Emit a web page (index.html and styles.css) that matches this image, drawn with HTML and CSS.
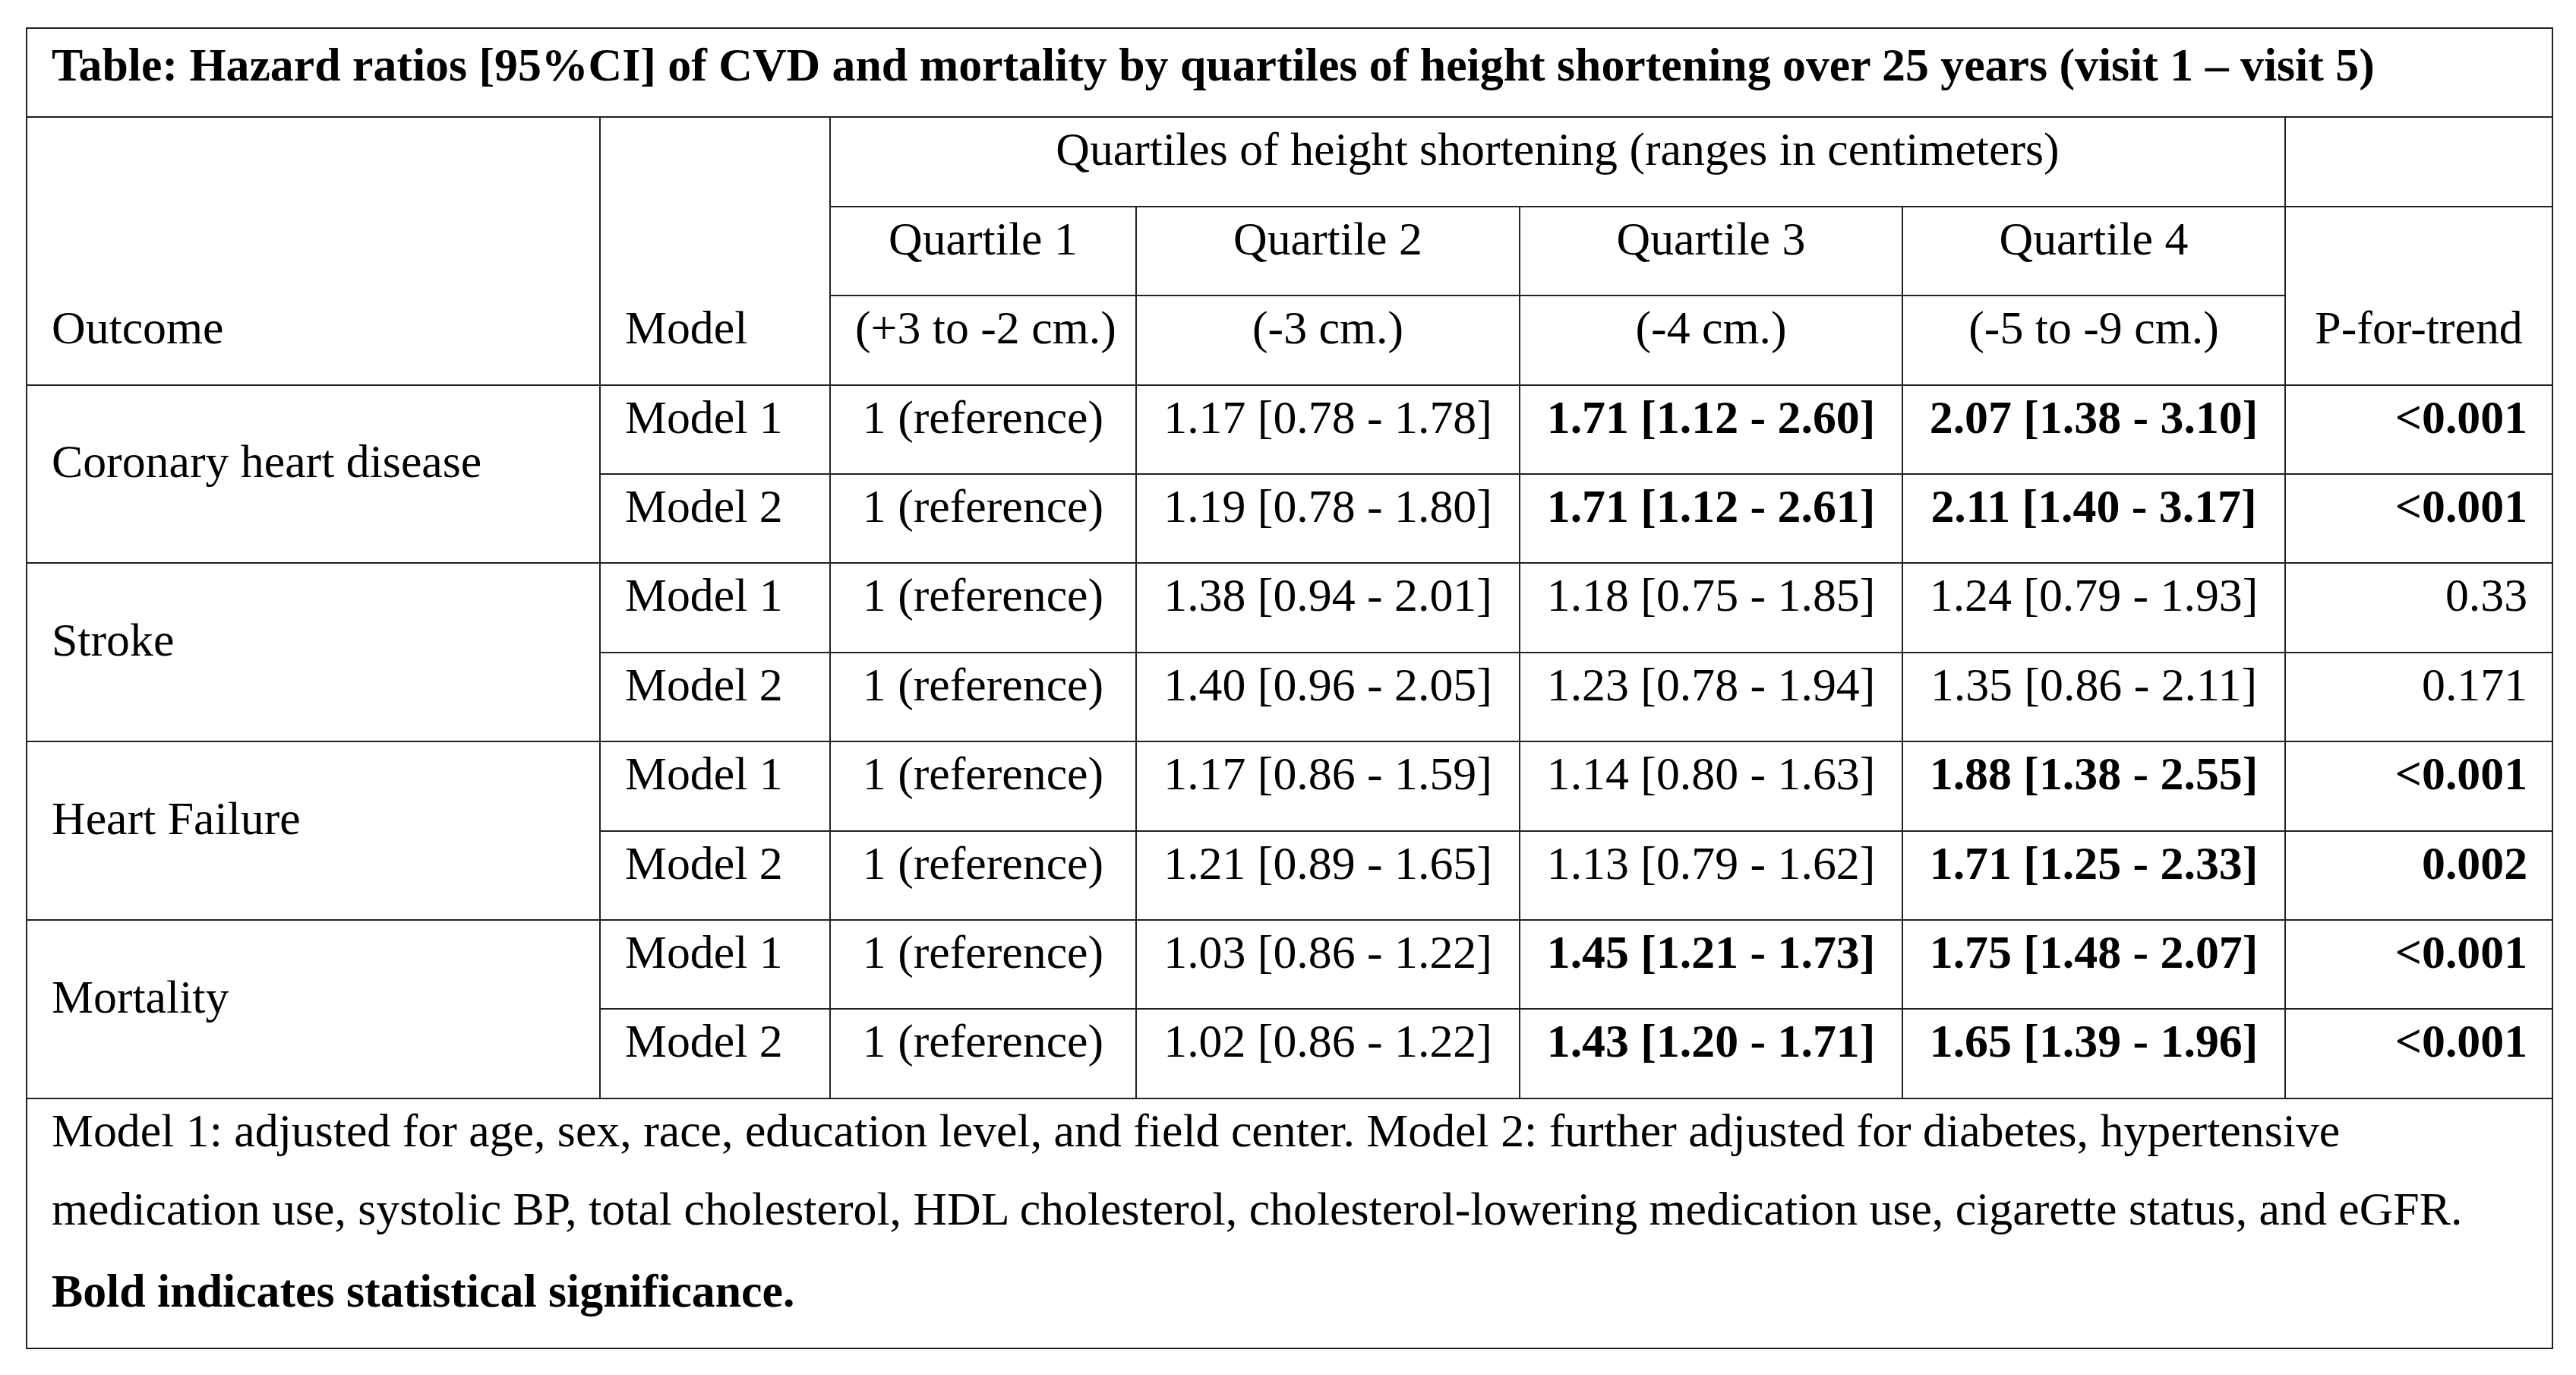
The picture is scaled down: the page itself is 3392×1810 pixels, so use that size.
FILE: index.html
```html
<!DOCTYPE html>
<html lang="en">
<head>
<meta charset="utf-8">
<title>Hazard ratios table</title>
<link rel="stylesheet" href="styles.css">
</head>
<body>
<table class="hr-table">
  <colgroup>
    <col class="c-outcome">
    <col class="c-model">
    <col class="c-q1">
    <col class="c-q2">
    <col class="c-q3">
    <col class="c-q4">
    <col class="c-p">
  </colgroup>
  <tbody>
    <tr class="row">
      <td class="title" colspan="7">Table: Hazard ratios [95%CI] of CVD and mortality by quartiles of height shortening over 25 years (visit 1 – visit 5)</td>
    </tr>
    <tr class="row">
      <td class="hbottom" rowspan="3">Outcome</td>
      <td class="hbottom" rowspan="3">Model</td>
      <td class="center" colspan="4">Quartiles of height shortening (ranges in centimeters)</td>
      <td></td>
    </tr>
    <tr class="row">
      <td class="center">Quartile 1</td>
      <td class="center">Quartile 2</td>
      <td class="center">Quartile 3</td>
      <td class="center">Quartile 4</td>
      <td class="hbottom center" rowspan="2">P-for-trend</td>
    </tr>
    <tr class="row">
      <td class="center">(+3 to -2 cm.)</td>
      <td class="center">(-3 cm.)</td>
      <td class="center">(-4 cm.)</td>
      <td class="center">(-5 to -9 cm.)</td>
    </tr>

    <tr class="row">
      <td class="outcome" rowspan="2">Coronary heart disease</td>
      <td>Model 1</td>
      <td class="center">1 (reference)</td>
      <td class="center">1.17 [0.78 - 1.78]</td>
      <td class="center sig">1.71 [1.12 - 2.60]</td>
      <td class="center sig">2.07 [1.38 - 3.10]</td>
      <td class="right sig">&lt;0.001</td>
    </tr>
    <tr class="row">
      <td>Model 2</td>
      <td class="center">1 (reference)</td>
      <td class="center">1.19 [0.78 - 1.80]</td>
      <td class="center sig">1.71 [1.12 - 2.61]</td>
      <td class="center sig">2.11 [1.40 - 3.17]</td>
      <td class="right sig">&lt;0.001</td>
    </tr>

    <tr class="row">
      <td class="outcome" rowspan="2">Stroke</td>
      <td>Model 1</td>
      <td class="center">1 (reference)</td>
      <td class="center">1.38 [0.94 - 2.01]</td>
      <td class="center">1.18 [0.75 - 1.85]</td>
      <td class="center">1.24 [0.79 - 1.93]</td>
      <td class="right">0.33</td>
    </tr>
    <tr class="row">
      <td>Model 2</td>
      <td class="center">1 (reference)</td>
      <td class="center">1.40 [0.96 - 2.05]</td>
      <td class="center">1.23 [0.78 - 1.94]</td>
      <td class="center">1.35 [0.86 - 2.11]</td>
      <td class="right">0.171</td>
    </tr>

    <tr class="row">
      <td class="outcome" rowspan="2">Heart Failure</td>
      <td>Model 1</td>
      <td class="center">1 (reference)</td>
      <td class="center">1.17 [0.86 - 1.59]</td>
      <td class="center">1.14 [0.80 - 1.63]</td>
      <td class="center sig">1.88 [1.38 - 2.55]</td>
      <td class="right sig">&lt;0.001</td>
    </tr>
    <tr class="row">
      <td>Model 2</td>
      <td class="center">1 (reference)</td>
      <td class="center">1.21 [0.89 - 1.65]</td>
      <td class="center">1.13 [0.79 - 1.62]</td>
      <td class="center sig">1.71 [1.25 - 2.33]</td>
      <td class="right sig">0.002</td>
    </tr>

    <tr class="row">
      <td class="outcome" rowspan="2">Mortality</td>
      <td>Model 1</td>
      <td class="center">1 (reference)</td>
      <td class="center">1.03 [0.86 - 1.22]</td>
      <td class="center sig">1.45 [1.21 - 1.73]</td>
      <td class="center sig">1.75 [1.48 - 2.07]</td>
      <td class="right sig">&lt;0.001</td>
    </tr>
    <tr class="row">
      <td>Model 2</td>
      <td class="center">1 (reference)</td>
      <td class="center">1.02 [0.86 - 1.22]</td>
      <td class="center sig">1.43 [1.20 - 1.71]</td>
      <td class="center sig">1.65 [1.39 - 1.96]</td>
      <td class="right sig">&lt;0.001</td>
    </tr>

    <tr>
      <td class="note" colspan="7">
        <p class="note-text">Model 1: adjusted for age, sex, race, education level, and field center. Model 2: further adjusted for diabetes, hypertensive<br>medication use, systolic BP, total cholesterol, HDL cholesterol, cholesterol-lowering medication use, cigarette status, and eGFR.</p>
        <p class="note-bold">Bold indicates statistical significance.</p>
      </td>
    </tr>
  </tbody>
</table>
</body>
</html>
```

FILE: styles.css
```css
html, body {
  margin: 0;
  padding: 0;
  background: #ffffff;
}

body {
  padding: 36px 0 0 34px;
  font-family: "Liberation Serif", "Times New Roman", serif;
  font-size: 61.8px;
  color: #000000;
}

.hr-table {
  border-collapse: collapse;
  table-layout: fixed;
  width: 3326px;
  border: 2px solid #333333;
}

.c-outcome { width: 755px; }
.c-model   { width: 303px; }
.c-q1      { width: 403px; }
.c-q2      { width: 505px; }
.c-q3      { width: 504px; }
.c-q4      { width: 504px; }
.c-p       { width: 352px; }

.row {
  height: 117.4px;
}

.hr-table td {
  border: 2px solid #222222;
  padding: 8px 32px 40px 32px;
  line-height: 67.4px;
  vertical-align: middle;
  text-align: left;
  white-space: nowrap;
  font-weight: 400;
}

.hr-table td.title {
  font-weight: 700;
  padding-top: 14px;
  padding-bottom: 34px;
}

.hr-table td.center {
  text-align: center;
}

.hr-table td.right {
  text-align: right;
}

.hr-table td.sig {
  font-weight: 700;
}

.hr-table td.hbottom {
  vertical-align: bottom;
}

.hr-table td.outcome {
  vertical-align: middle;
}

.hr-table td.note {
  padding: 0 32px 23px 32px;
  vertical-align: top;
}

.note-text {
  margin: -10px 0 0 0;
  line-height: 103px;
}

.note-bold {
  margin: 5px 0 0 0;
  line-height: 103px;
  font-weight: 700;
}
```
